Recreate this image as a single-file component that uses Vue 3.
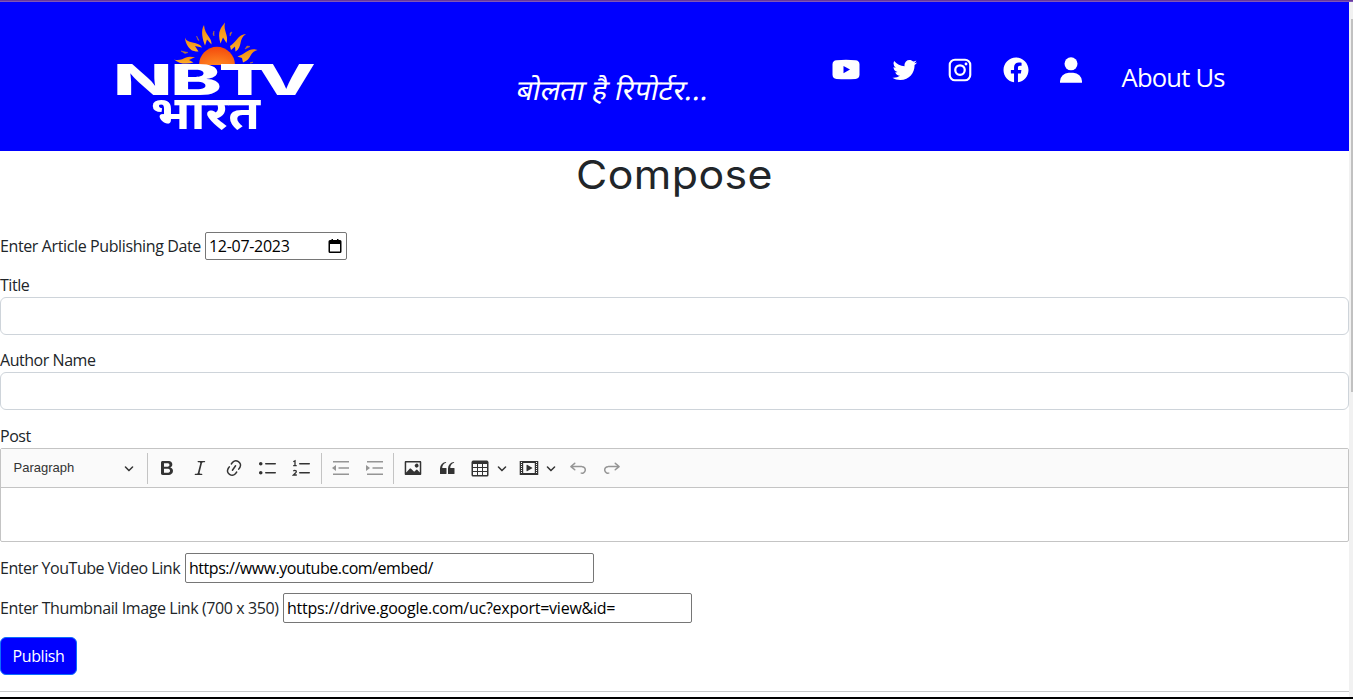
<script setup>
import { ref } from 'vue'

const title = ref('')
const author = ref('')
const videoLink = ref('https://www.youtube.com/embed/')
const thumbLink = ref('https://drive.google.com/uc?export=view&id=')

const rays = [
  'M174 59.500C179 61 183 59 186 57.500C189 56 192 57 195 57L189 60L193.500 62.500C187 64.500 179 64 174 59.500Z',
  'M185 37.500C185 41 187 47 192 50.500C195 51.500 197 51.500 198.500 51.500L195 46L202 47.500C200 42.500 192 43.500 188 41C186 40 185.500 39 185 37.500Z',
  'M204 25C200.500 31 202.500 39 205 45.500L207 39.500L211.500 44.500C212 37 205 36 204 25Z',
  'M225 22.500C221 28 217 31 220.500 43.500L223 37.500L226.500 43C229 35 223 31 225 22.500Z',
  'M246 34C238 34 236 43 230 46L231 50L235 46.500L235.500 51.500C243 47 238 39 246 34Z',
  'M257.500 50C249 47 246 54 237.500 56.500L242 58L243 62.500C253 58.500 248 53 257.500 50Z'
]
const sparks = ['M196.500 36l2.500 4.500-1-.5z', 'M214 31l0 5-1-2z', 'M232 32l-2 4 0-3z', 'M250 46.500l-5 2.500 2-3z', 'M181 51l7 1.500-3 1z', 'M250 63l3-1-1 1z']

const bold = 'M10.187 17H5.773c-.637 0-1.092-.138-1.364-.415-.273-.277-.409-.718-.409-1.323V4.738c0-.617.14-1.062.419-1.332.279-.27.73-.406 1.354-.406h4.68c.69 0 1.288.041 1.793.124.506.083.96.242 1.36.478.341.197.644.447.906.75a3.262 3.262 0 0 1 .808 2.162c0 1.401-.722 2.426-2.167 3.075C15.05 10.175 16 11.315 16 13.01a3.756 3.756 0 0 1-2.296 3.504 6.1 6.1 0 0 1-1.517.377c-.571.073-1.238.11-2 .11zm-.217-6.217H7v4.087h3.069c1.977 0 2.965-.69 2.965-2.072 0-.707-.256-1.22-.768-1.537-.512-.319-1.277-.478-2.296-.478zM7 5.13v3.619h2.606c.729 0 1.292-.067 1.69-.2a1.6 1.6 0 0 0 .91-.765c.165-.267.247-.566.247-.897 0-.707-.26-1.176-.778-1.409-.519-.232-1.31-.348-2.375-.348H7z'
const italic = 'm9.586 14.633.021.004c-.036.335.095.655.393.962.082.083.173.15.274.201h1.474a.6.6 0 1 1 0 1.2H5.304a.6.6 0 0 1 0-1.2h1.15c.474-.07.809-.182 1.005-.334.157-.122.291-.32.404-.597l2.416-9.55a1.053 1.053 0 0 0-.281-.823 1.12 1.12 0 0 0-.442-.296H8.15a.6.6 0 0 1 0-1.2h6.443a.6.6 0 1 1 0 1.2h-1.195c-.376.056-.65.155-.823.296-.215.175-.423.439-.623.79l-2.366 9.347z'
const link = 'm11.077 15 .991-1.416a.75.75 0 1 1 1.229.86l-1.148 1.64a.748.748 0 0 1-.217.206 5.251 5.251 0 0 1-8.503-5.955.741.741 0 0 1 .12-.274l1.147-1.639a.75.75 0 1 1 1.228.86L4.933 10.7l.006.003a3.75 3.75 0 0 0 6.132 4.294l.006.004zm5.494-5.335a.748.748 0 0 1-.12.274l-1.147 1.639a.75.75 0 1 1-1.228-.86l.86-1.23a3.75 3.75 0 0 0-6.144-4.301l-.86 1.229a.75.75 0 0 1-1.229-.86l1.148-1.64a.748.748 0 0 1 .217-.206 5.251 5.251 0 0 1 8.503 5.955zm-4.563-2.532a.75.75 0 0 1 .184 1.045l-3.155 4.505a.75.75 0 1 1-1.229-.86l3.155-4.506a.75.75 0 0 1 1.045-.184z'
const bullets = 'M7 5.75c0 .414.336.75.75.75h9.5a.75.75 0 1 0 0-1.5h-9.5a.75.75 0 0 0-.75.75zm-6 0C1 4.784 1.777 4 2.75 4c.966 0 1.75.777 1.75 1.75 0 .966-.777 1.75-1.75 1.75C1.784 7.5 1 6.723 1 5.75zm6 9c0 .414.336.75.75.75h9.5a.75.75 0 1 0 0-1.5h-9.5a.75.75 0 0 0-.75.75zm-6 0c0-.966.777-1.75 1.75-1.75.966 0 1.75.777 1.75 1.75 0 .966-.777 1.75-1.75 1.75-.966 0-1.75-.777-1.75-1.75z'
const quote = 'M3 10.423a6.5 6.5 0 0 1 6.056-6.408l.038.67C6.448 5.423 5.354 7.663 5.22 10H9c.552 0 .5.432.5.986v4.511c0 .554-.448.503-1 .503h-5c-.552 0-.5-.449-.5-1.003v-4.574zm8 0a6.5 6.5 0 0 1 6.056-6.408l.038.67c-2.646.739-3.74 2.979-3.873 5.315H17c.552 0 .5.432.5.986v4.511c0 .554-.448.503-1 .503h-5c-.552 0-.5-.449-.5-1.003v-4.574z'
const image = 'M6.91 10.54c.26-.23.64-.21.88.03l3.36 3.14 2.23-2.06a.64.64 0 0 1 .87 0l2.52 2.97V4.5H3.2v10.12l3.71-4.08zm10.27-7.51c.6 0 1.09.47 1.09 1.05v11.84c0 .59-.49 1.06-1.09 1.06H2.79c-.6 0-1.09-.47-1.09-1.06V4.08c0-.58.49-1.05 1.1-1.05h14.38zm-5.22 5.56a1.96 1.96 0 1 1 3.4-1.96 1.96 1.96 0 0 1-3.4 1.96z'
const table = 'M3 6v3h4V6H3zm0 4v3h4v-3H3zm0 4v3h4v-3H3zm5 3h4v-3H8v3zm5 0h4v-3h-4v3zm4-4v-3h-4v3h4zm0-4V6h-4v3h4zm1.5 8a1.5 1.5 0 0 1-1.5 1.5H3A1.5 1.5 0 0 1 1.5 17V4c.222-.863 1.068-1.5 2-1.5h13c.932 0 1.778.637 2 1.5v13zM12 13v-3H8v3h4zm0-4V6H8v3h4z'
const media = 'M18.68 3.03c.6 0 .59-.03.59.55v12.84c0 .59.01.56-.59.56H1.29c-.6 0-.59.03-.59-.56V3.58c0-.58-.01-.55.6-.55h17.38zM15.77 15V5H4.2v10h11.57zM2 4v1h1V4H2zm0 2v1h1V6H2zm0 2v1h1V8H2zm0 2v1h1v-1H2zm0 2v1h1v-1H2zm0 2v1h1v-1H2zM17 4v1h1V4h-1zm0 2v1h1V6h-1zm0 2v1h1V8h-1zm0 2v1h1v-1h-1zm0 2v1h1v-1h-1zm0 2v1h1v-1h-1zM7.5 7.177a.4.4 0 0 1 .593-.351l5.133 2.824a.4.4 0 0 1 0 .7l-5.133 2.824a.4.4 0 0 1-.593-.35V7.176v.001z'
const undo = 'm5.042 9.367 2.189 1.837a.75.75 0 0 1-.965 1.149l-3.788-3.18a.747.747 0 0 1-.21-.284.75.75 0 0 1 .17-.945L6.23 4.762a.75.75 0 1 1 .964 1.15L4.863 7.866h8.917A.75.75 0 0 1 14 7.9a4 4 0 1 1-1.477 7.718l.344-1.489a2.5 2.5 0 1 0 1.094-4.73l.008-.032H5.042z'
const chevron = 'M.941 4.523a.75.75 0 1 1 1.06-1.06l3.006 3.005 3.005-3.005a.75.75 0 1 1 1.06 1.06l-3.549 3.55a.75.75 0 0 1-1.168-.136L.941 4.523z'
</script>

<template>
  <div class="page">
    <div class="edge-top"></div>
    <div class="body">
      <main class="content">
        <header class="header">
          <svg class="logo" viewBox="110 17 212 132" width="212" height="132">
            <defs>
              <linearGradient id="ray" x1="0" y1="0" x2="0" y2="1">
                <stop offset="0" stop-color="#f08a10" /><stop offset="1" stop-color="#ffb02a" />
              </linearGradient>
              <radialGradient id="sun" cx=".5" cy="1" r="1">
                <stop offset="0" stop-color="#ff8a22" /><stop offset="1" stop-color="#f4480c" />
              </radialGradient>
            </defs>
            <path v-for="r in rays" :key="r" :d="r" fill="url(#ray)" />
            <path v-for="s in sparks" :key="s" :d="s" fill="#b67a38" stroke="#b67a38" stroke-width=".5" />
            <path d="M199 65a17.8 18 0 0 1 36 0z" fill="url(#sun)" />
            <text class="brand" transform="translate(113 94.500) scale(1.850 1)" x="0 31 57 77.300" y="0">NBTV</text>
            <text class="bharat" x="150.500" y="129" textLength="109.500" lengthAdjust="spacingAndGlyphs">भारत</text>
          </svg>
          <svg class="tagline" viewBox="0 0 200 50" width="200" height="50">
            <text transform="translate(0 33) skewX(-12)" x="1" y="0" textLength="192" lengthAdjust="spacingAndGlyphs">बोलता है रिपोर्टर...</text>
          </svg>
          <nav class="social">
            <svg class="yt" viewBox="0 0 28 30"><path fill-rule="evenodd" d="M4.5 5.2Q14 4.500 23.5 5.200Q27.3 5.500 27.5 9.200V19.800Q27.3 23.500 23.5 23.900Q14 24.500 4.5 23.900Q.7 23.500 .5 19.800V9.200Q.7 5.500 4.5 5.200ZM11.5 10.900v7.4L18 14.600z" /></svg>
            <svg class="tw" viewBox="0 0 24 24"><path d="M19.633 7.997c.013.175.013.349.013.523 0 5.325-4.053 11.461-11.46 11.461-2.282 0-4.402-.661-6.186-1.809.324.037.636.05.973.05a8.07 8.07 0 0 0 5.001-1.721 4.036 4.036 0 0 1-3.767-2.793c.249.037.499.062.761.062.361 0 .724-.05 1.061-.137a4.027 4.027 0 0 1-3.23-3.953v-.05c.537.299 1.16.486 1.82.511a4.022 4.022 0 0 1-1.796-3.354c0-.748.199-1.434.548-2.032a11.457 11.457 0 0 0 8.306 4.215c-.062-.3-.1-.611-.1-.923a4.026 4.026 0 0 1 4.028-4.028c1.16 0 2.207.486 2.943 1.272a7.957 7.957 0 0 0 2.556-.973 4.02 4.02 0 0 1-1.771 2.22 8.073 8.073 0 0 0 2.319-.624 8.645 8.645 0 0 1-2.019 2.083z" /></svg>
            <svg class="ig" viewBox="0 0 24 24"><g fill="none" stroke="#fff"><rect x="3.8" y="3.8" width="16.4" height="16.4" rx="4.2" stroke-width="1.7" /><circle cx="12" cy="12" r="3.8" stroke-width="1.8" /></g><circle cx="16.8" cy="7.2" r="1.15" /></svg>
            <svg class="fb" viewBox="0 0 24 24"><path d="M12.001 2.002c-5.522 0-9.999 4.477-9.999 9.999 0 4.99 3.656 9.126 8.437 9.879v-6.988h-2.54v-2.891h2.54V9.798c0-2.508 1.493-3.891 3.776-3.891 1.094 0 2.24.195 2.24.195v2.459h-1.264c-1.24 0-1.628.772-1.628 1.563v1.875h2.771l-.443 2.891h-2.328v6.988C18.344 21.129 22 16.992 22 12.001c0-5.522-4.477-9.999-9.999-9.999z" /></svg>
            <svg class="us" viewBox="0 0 30 30"><circle cx="15" cy="8.8" r="6.5" /><path d="M4 27.8v-1.5a8.8 8.8 0 0 1 8.8-8.6h4.4a8.8 8.8 0 0 1 8.8 8.6v1.5z" /></svg>
          </nav>
          <a class="about">About Us</a>
        </header>

        <h1 class="heading">Compose</h1>

        <div class="row date-row">
          <label class="t-date">Enter Article Publishing Date</label>
          <div class="box date-box">
            <span>12-07-2023</span>
            <svg width="14" height="15" viewBox="0 0 14 15"><path fill-rule="evenodd" d="M2 1h1.5V0H5v1h4V0h1.5v1H12q1.5 0 1.5 1.5v10Q13.500 14 12 14H2Q.5 14 .5 12.500v-10Q.5 1 2 1zM2 5v7.500h10V5z" /></svg>
          </div>
        </div>

        <label class="label l-title">Title</label>
        <input v-model="title" class="control" />
        <label class="label l-author">Author Name</label>
        <input v-model="author" class="control" />
        <label class="label l-post">Post</label>

        <section class="editor">
          <div class="toolbar">
            <span class="para">Paragraph</span>
            <svg class="chev para-chev" viewBox="0 0 10 10"><path :d="chevron" /></svg>
            <i class="sep"></i>
            <span class="tool"><svg viewBox="0 0 20 20"><path :d="bold" /></svg></span>
            <span class="tool"><svg viewBox="0 0 20 20"><path :d="italic" /></svg></span>
            <span class="tool"><svg viewBox="0 0 20 20"><path :d="link" /></svg></span>
            <span class="tool list"><svg viewBox="0 0 20 20"><path :d="bullets" /></svg></span>
            <span class="tool"><svg viewBox="0 0 20 20">
              <path d="M7.750 5h9.500a.75.75 0 0 1 0 1.500h-9.500a.75.75 0 0 1 0-1.500zM7.750 14h9.500a.75.75 0 0 1 0 1.500h-9.500a.75.75 0 0 1 0-1.500z" />
              <path d="M1.300 3.800L3 2.800v5M1.200 7.700h3.500M1.300 13.100q1.300-1.300 2.600-.3 1 1-.5 2.300l-2 1.900h3.400" fill="none" stroke="#333" stroke-width="1.300" />
            </svg></span>
            <i class="sep sep-list"></i>
            <span class="tool dim"><svg viewBox="0 0 20 20"><path d="M2 3h16v1.500H2zM7.500 9.200h10.500v1.500H7.500zM2 15.500h16v1.500H2zM5 7v6L1 10z" /></svg></span>
            <span class="tool dim"><svg viewBox="0 0 20 20"><path d="M2 3h16v1.500H2zM7.500 9.200h10.500v1.500H7.500zM2 15.500h16v1.500H2zM1 7v6l4-3z" /></svg></span>
            <i class="sep sep-indent"></i>
            <span class="tool"><svg viewBox="0 0 20 20"><path :d="image" /></svg></span>
            <span class="tool"><svg viewBox="0 0 20 20"><path :d="quote" /></svg></span>
            <span class="tool"><svg viewBox="0 0 20 20"><path :d="table" /></svg></span>
            <svg class="chev" viewBox="0 0 10 10"><path :d="chevron" /></svg>
            <span class="tool media"><svg viewBox="0 0 20 20"><path :d="media" /></svg></span>
            <svg class="chev" viewBox="0 0 10 10"><path :d="chevron" /></svg>
            <span class="tool dim undo"><svg viewBox="0 0 20 20"><path :d="undo" /></svg></span>
            <span class="tool dim"><svg class="flip" viewBox="0 0 20 20"><path :d="undo" /></svg></span>
          </div>
          <div class="canvas"></div>
        </section>

        <div class="row link-row first">
          <label class="t-video">Enter YouTube Video Link</label>
          <input v-model="videoLink" class="box link-box v-box" />
        </div>
        <div class="row link-row second">
          <label class="t-thumb">Enter Thumbnail Image Link (700 x 350)</label>
          <input v-model="thumbLink" class="box link-box" />
        </div>
        <button class="publish">Publish</button>
        <hr class="rule" />
      </main>
      <div class="scroll"><div class="thumb"></div></div>
    </div>
    <div class="edge-bottom"></div>
  </div>
</template>

<style>
html, body { margin: 0; overflow: hidden; }
</style>

<style scoped>
* { box-sizing: border-box; }
.page { width: 1353px; height: 699px; display: flex; flex-direction: column; background: #fff; color: #212529; font: 16px/24px "Open Sans", "Noto Sans", sans-serif; }
.edge-top { height: 2px; background: linear-gradient(#673a9e 50%, #8055b8 50%); flex: none; }
.edge-bottom { height: 2px; background: #000; flex: none; }
.body { flex: 1; display: flex; min-height: 0; }
.content { width: 1349px; display: flex; flex-direction: column; align-items: flex-start; }
.scroll { width: 4px; background: #f1f1f1; padding: 17px 0 0 2px; }
.thumb { height: 373px; background: #c1c1c1; }
.header { width: 100%; height: 149px; background: #00f; color: #fff; display: flex; align-items: flex-start; padding: 15px 0 0 110px; flex: none; }
.logo { flex: none; }
.brand { font: 800 42px Inter, sans-serif; fill: #fff; }
.bharat { font: 700 46px "Noto Sans", "Noto Sans Devanagari", sans-serif; fill: #fff; }
.tagline { margin: 50px 0 0 192px; flex: none; overflow: visible; }
.tagline text { font: 400 28px "Noto Sans", "Noto Sans Devanagari", sans-serif; fill: #fff; }
.social { display: flex; margin: 37.500px 0 0 117.500px; width: 256px; flex: none; }
.social svg { width: 30px; height: 30px; fill: #fff; flex: none; }
.social .yt { width: 28px; }
.social .tw { margin-left: 30px; }
.social .ig { margin-left: 25px; }
.social .fb { margin-left: 26px; }
.social .us { margin-left: 25px; }
.about { font-size: 25.600px; line-height: 38px; margin: 42px 0 0 34px; white-space: nowrap; letter-spacing: -.8px; }
.heading { width: 100%; height: 48px; margin: 0; text-align: center; font: 400 40px/48px Inter, sans-serif; letter-spacing: .4px; transform: scaleX(1.07); }
.row { display: flex; align-items: center; white-space: nowrap; }
.date-row { height: 28px; margin-top: 33px; }
.t-date { width: 205px; letter-spacing: -.38px; }
.box { border: 1px solid #767676; border-radius: 2px; background: #fff; color: #000; }
.date-box { width: 142px; height: 28px; display: flex; align-items: center; justify-content: space-between; padding: 0 4px 0 3px; letter-spacing: -.3px; }
.label { height: 24px; letter-spacing: -.46px; }
.l-title { margin-top: 13px; }
.l-author { margin-top: 13px; }
.l-post { margin-top: 14px; }
.control { width: 1349px; height: 38px; border: 1px solid #ced4da; border-radius: 6px; background: #fff; padding: 6px 12px; font: inherit; }
.editor { width: 1349px; height: 94px; border: 1px solid #c4c4c4; border-radius: 2px; flex: none; }
.toolbar { height: 39px; background: #fafafa; border-bottom: 1px solid #c4c4c4; display: flex; align-items: center; }
.toolbar svg { fill: #333; flex: none; }
.para { width: 111px; padding-left: 12.500px; font: 13px/20px "Liberation Sans", sans-serif; color: #333; }
.chev { width: 10px; height: 10px; }
.para-chev { margin-left: 12px; }
.sep { width: 1px; height: 31px; background: #c4c4c4; margin: 0 2px 0 13px; }
.sep-list { margin: 0 3px 0 2px; }
.sep-indent { margin: 0 3px 0 1px; }
.tool { width: 33.500px; display: flex; justify-content: center; flex: none; }
.tool svg { width: 20px; height: 20px; }
.list { margin-left: 1px; }
.dim { opacity: .5; }
.media { margin-left: 5px; }
.undo { margin-left: 6px; }
.flip { transform: scaleX(-1); }
.link-row { height: 30px; }
.first { margin-top: 11px; }
.second { margin-top: 10px; }
.t-video { width: 185px; letter-spacing: -.44px; }
.t-thumb { width: 283px; letter-spacing: -.4px; }
.link-box { width: 409px; height: 30px; padding: 1px 3px; font: inherit; letter-spacing: -.24px; }
.v-box { letter-spacing: -.47px; }
.publish { width: 77px; height: 38px; margin: 14px 0 0; background: #00f; color: #fff; border: 1px solid #0d6efd; border-radius: 6px; font: inherit; padding: 0; letter-spacing: -.4px; flex: none; }
.rule { width: 100%; margin: 16px 0 0; border: 0; border-top: 1px solid #c8c9ca; }
</style>
